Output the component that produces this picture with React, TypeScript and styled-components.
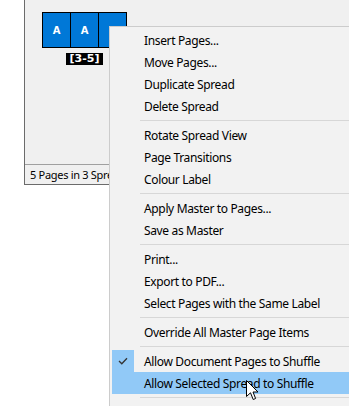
import React from "react";
import styled, { createGlobalStyle } from "styled-components";

const GlobalStyle = createGlobalStyle`
  html, body {
    margin: 0;
    padding: 0;
    background: #ffffff;
    overflow: hidden;
  }
  body {
    font-family: "Noto Sans", "Open Sans", "Liberation Sans", sans-serif;
  }
`;

type MenuEntry =
  | { kind: "item"; label: string; checked?: boolean; hover?: boolean }
  | { kind: "sep" };

const menu: MenuEntry[] = [
  { kind: "item", label: "Insert Pages..." },
  { kind: "item", label: "Move Pages..." },
  { kind: "item", label: "Duplicate Spread" },
  { kind: "item", label: "Delete Spread" },
  { kind: "sep" },
  { kind: "item", label: "Rotate Spread View" },
  { kind: "item", label: "Page Transitions" },
  { kind: "item", label: "Colour Label" },
  { kind: "sep" },
  { kind: "item", label: "Apply Master to Pages..." },
  { kind: "item", label: "Save as Master" },
  { kind: "sep" },
  { kind: "item", label: "Print..." },
  { kind: "item", label: "Export to PDF..." },
  { kind: "item", label: "Select Pages with the Same Label" },
  { kind: "sep" },
  { kind: "item", label: "Override All Master Page Items" },
  { kind: "sep" },
  { kind: "item", label: "Allow Document Pages to Shuffle", checked: true },
  { kind: "item", label: "Allow Selected Spread to Shuffle", hover: true },
  { kind: "sep" },
];

const App = () => {
  return (
    <Screen>
      <GlobalStyle />
      <Panel>
        <SpreadArea>
          <Spread>
            <Pages>
              <Page>A</Page>
              <Page>A</Page>
              <Page />
            </Pages>
            <SpreadLabel>[3-5]</SpreadLabel>
          </Spread>
        </SpreadArea>
        <StatusBar>5 Pages in 3 Spreads</StatusBar>
      </Panel>

      <ContextMenu>
        {menu.map((entry, i) =>
          entry.kind === "sep" ? (
            <Separator key={i} />
          ) : (
            <MenuItem key={i} $hover={entry.hover}>
              <CheckCell $checked={entry.checked}>
                {entry.checked && (
                  <svg width="10" height="8" viewBox="0 0 10 8">
                    <path d="M1 4 L3.8 6.8 L9 1.2" fill="none" stroke="#333" strokeWidth="1.3" />
                  </svg>
                )}
              </CheckCell>
              <ItemLabel>{entry.label}</ItemLabel>
            </MenuItem>
          )
        )}
      </ContextMenu>

      {/* mouse pointer */}
      <Pointer width="13" height="21" viewBox="0 0 13 21">
        <path
          d="M0.5 0.5 L0.5 16.5 L4.5 12.8 L7.2 19.5 L9.6 18.5 L7 12 L12 12 Z"
          fill="#fff"
          stroke="#000"
          strokeWidth="1"
          strokeLinejoin="miter"
        />
      </Pointer>
    </Screen>
  );
};

const Screen = styled.div`
  position: relative;
  width: 349px;
  height: 406px;
  overflow: hidden;
`;

const Panel = styled.div`
  margin-left: 24px;
  width: 360px;
  height: 184px;
  display: flex;
  flex-direction: column;
  background: #f0f0f0;
  border-left: 1px solid #6b6b6b;
  border-bottom: 1px solid #6b6b6b;
`;

const SpreadArea = styled.div`
  flex: 1;
  padding: 12px 0 0 17px;
`;

const Spread = styled.div`
  display: inline-flex;
  flex-direction: column;
  align-items: center;
`;

const Pages = styled.div`
  display: flex;
  border: 1px solid #000;
`;

const Page = styled.div`
  width: 27px;
  height: 34px;
  background: #0078d7;
  color: #fff;
  font-family: "DejaVu Sans", sans-serif;
  font-weight: bold;
  font-size: 10px;
  display: flex;
  align-items: center;
  justify-content: center;
  & + & {
    border-left: 1px solid #000;
  }
`;

const SpreadLabel = styled.div`
  margin-top: 5px;
  height: 12px;
  padding: 0 4px;
  background: #000;
  color: #fff;
  font-family: "DejaVu Sans", sans-serif;
  font-weight: bold;
  font-size: 11px;
  line-height: 12px;
`;

const StatusBar = styled.div`
  height: 19px;
  border-top: 1px solid #a0a0a0;
  padding-left: 5px;
  font-size: 11px;
  letter-spacing: -0.3px;
  line-height: 19px;
  color: #000;
  white-space: nowrap;
`;

const ContextMenu = styled.div`
  position: absolute;
  left: 109px;
  top: 26px;
  width: 300px;
  padding: 2px 2px 24px;
  background: #f2f2f2;
  border: 1px solid #cccccc;
`;

const MenuItem = styled.div<{ $hover?: boolean }>`
  display: flex;
  align-items: center;
  height: 22px;
  background: ${(p) => (p.$hover ? "#91c9f7" : "transparent")};
`;

const CheckCell = styled.div<{ $checked?: boolean }>`
  width: 22px;
  height: 22px;
  display: flex;
  align-items: center;
  justify-content: center;
  background: ${(p) => (p.$checked ? "#91c9f7" : "transparent")};
`;

const ItemLabel = styled.span`
  padding-left: 10px;
  font-size: 12px;
  letter-spacing: -0.35px;
  color: #000;
  white-space: nowrap;
`;

const Separator = styled.div`
  height: 7px;
  margin-left: 28px;
  display: flex;
  align-items: center;
  &::after {
    content: "";
    flex: 1;
    height: 1px;
    background: #d7d7d7;
  }
`;

const Pointer = styled.svg`
  position: absolute;
  left: 246px;
  top: 380px;
`;

export default App;
